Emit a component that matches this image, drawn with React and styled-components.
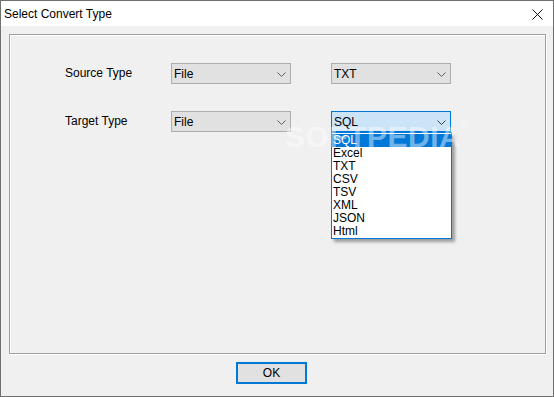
import styled, { createGlobalStyle } from "styled-components";

const GlobalStyle = createGlobalStyle`
  html, body {
    margin: 0;
    padding: 0;
    background: #f0f0f0;
  }
  * {
    box-sizing: border-box;
  }
`;

const typeOptions = ["SQL", "Excel", "TXT", "CSV", "TSV", "XML", "JSON", "Html"];

const Chevron = ({ color = "#606060" }) => (
  <svg width="9" height="5" viewBox="0 0 9 5">
    <path d="M0.5 0.5 L4.5 4.5 L8.5 0.5" fill="none" stroke={color} strokeWidth="1" />
  </svg>
);

const Combo = ({ value, open }) => (
  <ComboWrap>
    <ComboBox $focused={open}>
      <span>{value}</span>
      <ChevronSlot>
        <Chevron color={open ? "#404040" : "#606060"} />
      </ChevronSlot>
    </ComboBox>
    {open && (
      <DropList>
        {typeOptions.map((opt) => (
          <DropItem key={opt} $selected={opt === value}>
            {opt}
          </DropItem>
        ))}
      </DropList>
    )}
  </ComboWrap>
);

const App = () => {
  return (
    <>
      <GlobalStyle />
      <Window>
        <TitleBar>
          <Title>Select Convert Type</Title>
          <CloseButton>
            <svg width="11" height="11" viewBox="0 0 11 11">
              <path d="M0.5 0.5 L10.5 10.5 M10.5 0.5 L0.5 10.5" stroke="#111" strokeWidth="1" />
            </svg>
          </CloseButton>
        </TitleBar>
        <Body>
          <GroupBox>
            <FormGrid>
              <Label>Source Type</Label>
              <Combo value="File" />
              <Combo value="TXT" />
              <Label>Target Type</Label>
              <Combo value="File" />
              <Combo value="SQL" open />
            </FormGrid>
          </GroupBox>
          <Footer>
            <OkButton>OK</OkButton>
          </Footer>
        </Body>
        <Watermark>SOFTPEDIA<sup>®</sup></Watermark>
      </Window>
    </>
  );
};

const Window = styled.div`
  position: relative;
  width: 554px;
  height: 397px;
  border: 1px solid #707070;
  background: #f0f0f0;
  display: flex;
  flex-direction: column;
  font-family: "Liberation Sans", Arial, sans-serif;
  font-size: 12px;
  color: #000;
  overflow: hidden;
`;

const TitleBar = styled.div`
  height: 25px;
  background: #fff;
  display: flex;
  align-items: center;
  justify-content: space-between;
  padding: 0 10px 0 3px;
`;

const Title = styled.div`
  font-size: 12px;
  color: #000;
  padding-top: 1px;
`;

const CloseButton = styled.div`
  display: flex;
  align-items: center;
  padding-top: 1px;
`;

const Body = styled.div`
  flex: 1;
  display: flex;
  flex-direction: column;
  padding: 8px 7px 0 8px;
`;

const GroupBox = styled.div`
  height: 320px;
  border: 1px solid #a0a0a0;
  box-shadow: inset 1px 1px 0 #fff, 1px 1px 0 #fff;
  padding: 28px 0 0 55px;
`;

const FormGrid = styled.div`
  display: grid;
  grid-template-columns: 66px 120px 120px;
  column-gap: 40px;
  row-gap: 27px;
  align-items: center;
`;

const Label = styled.div`
  font-size: 12px;
  padding-bottom: 1px;
  white-space: nowrap;
`;

const ComboWrap = styled.div`
  position: relative;
  width: 120px;
`;

const ComboBox = styled.div`
  height: 21px;
  display: flex;
  align-items: center;
  justify-content: space-between;
  padding: 0 4px 0 2px;
  border: 1px solid ${({ $focused }) => ($focused ? "#0078d7" : "#adadad")};
  background: ${({ $focused }) => ($focused ? "#cce4f7" : "#e1e1e1")};
  font-size: 12px;
`;

const ChevronSlot = styled.span`
  display: flex;
  align-items: center;
  padding-top: 1px;
`;

const DropList = styled.div`
  position: absolute;
  top: 21px;
  left: 0;
  width: 121px;
  background: #fff;
  border: 1px solid #0078d7;
  padding: 1px 0 0;
  box-shadow: 3px 3px 3px rgba(0, 0, 0, 0.35);
  z-index: 2;
`;

const DropItem = styled.div`
  height: 13px;
  line-height: 13px;
  padding-left: 1px;
  font-size: 12px;
  background: ${({ $selected }) => ($selected ? "#0078d7" : "transparent")};
  color: ${({ $selected }) => ($selected ? "#fff" : "#000")};
`;

const Footer = styled.div`
  display: flex;
  padding: 8px 0 0 227px;
`;

const OkButton = styled.button`
  width: 71px;
  height: 22px;
  border: 2px solid #0078d7;
  background: #e1e1e1;
  font-family: "Liberation Sans", Arial, sans-serif;
  font-size: 12px;
  color: #000;
  padding: 0;
`;

const Watermark = styled.div`
  position: absolute;
  left: 284px;
  top: 119px;
  font-family: "Liberation Sans", Arial, sans-serif;
  font-weight: bold;
  font-size: 30px;
  letter-spacing: 0.5px;
  color: rgba(255, 255, 255, 0.45);
  pointer-events: none;
  z-index: 3;

  sup {
    font-size: 9px;
    vertical-align: top;
  }
`;

export default App;
